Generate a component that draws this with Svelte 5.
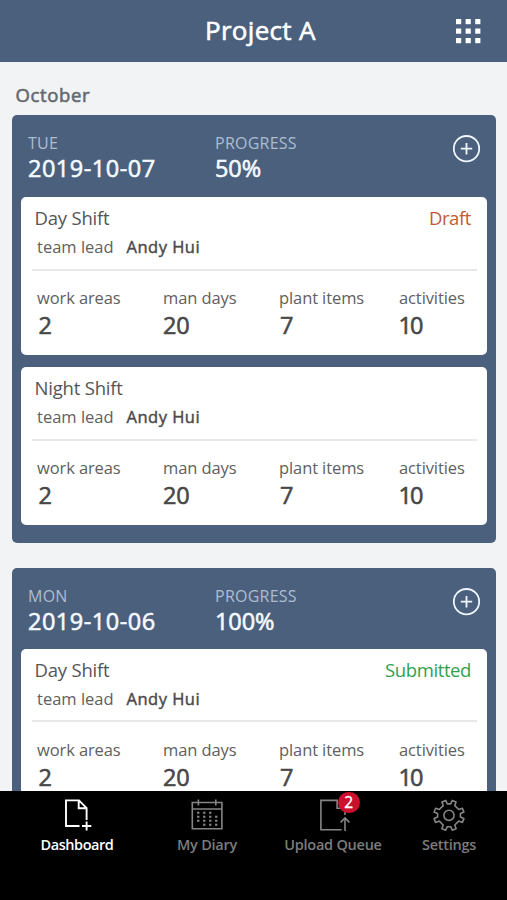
<script>
  const stats = [
    { label: 'work areas', value: '2', x: 'c1' },
    { label: 'man days', value: '20', x: 'c2' },
    { label: 'plant items', value: '7', x: 'c3' },
    { label: 'activities', value: '10', x: 'c4' }
  ];
  const days = [
    {
      day: 'TUE', date: '2019-10-07', progress: '50%',
      shifts: [
        { name: 'Day Shift', status: 'Draft', tone: 'draft' },
        { name: 'Night Shift', status: '', tone: '' }
      ]
    },
    {
      day: 'MON', date: '2019-10-06', progress: '100%',
      shifts: [{ name: 'Day Shift', status: 'Submitted', tone: 'submitted' }]
    }
  ];
  const dots = [0, 1, 2].flatMap((r) => [0, 1, 2].map((c) => [c * 9.6, r * 9.5]));
  const dates = [
    [6, 12.5], [12, 12.5], [18, 12.5],
    [6, 16.5], [12, 16.5], [18, 16.5], [24, 16.5],
    [6, 20.5], [12, 20.5], [18, 20.5], [24, 20.5],
    [12, 24.5], [18, 24.5], [24, 24.5]
  ];
</script>

<div class="screen">
  <header>
    <h1>Project A</h1>
    <svg class="apps" width="25" height="25" viewBox="0 0 25 25" fill="#fff">
      {#each dots as [x, y]}<rect {x} {y} width="5.2" height="5.2" />{/each}
    </svg>
  </header>

  <main>
    <h2>October</h2>
    {#each days as d}
      <section class="day">
        <div class="top">
          <div class="when"><div class="cap">{d.day}</div><div class="big">{d.date}</div></div>
          <div class="prog"><div class="cap">PROGRESS</div><div class="big pct">{d.progress}</div></div>
          <svg class="add" width="28" height="28" viewBox="0 0 28 28" fill="none" stroke="#f0f8ff" stroke-width="1.8">
            <circle cx="13.5" cy="13.7" r="12.7" />
            <path d="M13.5 8v11.4M7.8 13.7h11.4" />
          </svg>
        </div>
        {#each d.shifts as s}
          <article>
            <div class="row"><span class="name">{s.name}</span><span class="status {s.tone}">{s.status}</span></div>
            <div class="lead"><span class="label">team lead</span><b>Andy Hui</b></div>
            <div class="stats">
              {#each stats as st}
                <div class="stat {st.x}"><div class="label">{st.label}</div><div class="num">{st.value}</div></div>
              {/each}
            </div>
          </article>
        {/each}
      </section>
    {/each}
  </main>

  <nav>
    <div class="tab active t1">
      <svg width="32" height="34" viewBox="0 0 32 34" fill="none" stroke="currentColor" stroke-width="1.9">
        <path d="M18.5 28H5V2.4h13l7.6 7.7V22M17.7 2.6v7.6h7.6M25.6 23.4v9M21 28h9.3" />
      </svg>
      <span>Dashboard</span>
    </div>
    <div class="tab t2">
      <svg width="32" height="34" viewBox="0 0 32 34" fill="none" stroke="currentColor" stroke-width="1.6">
        <path d="M1.3 4.5h29.6v26.2H1.3zM1.3 11h29.6M7.4 1.5v6M24.8 1.5v6" />
        <g fill="currentColor" stroke="none">
          {#each dates as [x, y]}<rect x={x + 0.1} y={y + 1.2} width="2.3" height="2.1" />{/each}
        </g>
      </svg>
      <span>My Diary</span>
    </div>
    <div class="tab t3">
      <svg width="32" height="34" viewBox="0 0 32 34" fill="none" stroke="currentColor" stroke-width="1.6">
        <path d="M24.7 31.7H3.9V2.4h16.2v7.9h8M28 13v4M28 33V20.2M23.6 24.4l4.4-4.5 4.4 4.5" />
      </svg>
      <span>Upload Queue</span>
      <i class="badge">2</i>
    </div>
    <div class="tab t4">
      <svg width="32" height="34" viewBox="-16 -17.3 32 34" fill="none" stroke="currentColor" stroke-width="1.6" stroke-linejoin="round">
        <path d="M7.1-13.4L3.3-14.9L1.7-11.4L-1.7-11.4L-3.3-14.9L-7.1-13.4L-5.8-9.7L-9.7-5.8L-13.4-7.1L-14.9-3.3L-11.4-1.7L-11.4 1.7L-14.9 3.3L-13.4 7.1L-9.7 5.8L-5.8 9.7L-7.1 13.4L-3.3 14.9L-1.7 11.4L1.7 11.4L3.3 14.9L7.1 13.4L5.8 9.7L9.7 5.8L13.4 7.1L14.9 3.3L11.4 1.7L11.4-1.7L14.9-3.3L13.4-7.1L9.7-5.8L5.8-9.7Z" />
        <circle r="5.1" />
      </svg>
      <span>Settings</span>
    </div>
  </nav>
</div>

<style>
  :global(body) { margin: 0; }
  .screen {
    width: 507px; height: 900px; overflow: hidden; display: flex; flex-direction: column;
    background: #f2f3f5; font-family: 'Open Sans', 'Noto Sans', sans-serif; white-space: nowrap;
  }
  /* medium weight: regular glyphs with a thin outline */
  h1, h2, .big, .num, .lead b { font-weight: 400; -webkit-text-stroke: 0.6px currentColor; }
  header {
    flex: none; height: 62px; background: #4b607c; display: flex; align-items: center;
    box-sizing: border-box; padding: 0 26px 0 205px; justify-content: space-between;
  }
  h1 { margin: 0 0 2px; font-size: 26px; line-height: 60px; color: #fff; letter-spacing: 0.3px; }
  main { flex: 1; min-height: 0; overflow: hidden; padding: 0 11px 0 12px; }
  h2 { margin: 0; height: 53px; line-height: 65px; padding-left: 3.5px; font-size: 18.5px; color: #666a6e; letter-spacing: 0.65px; }
  .day { background: #4b607c; border-radius: 5px; padding: 0 9px 17.5px; margin-bottom: 26px; }
  .day + .day { margin-top: -0.5px; }
  .top { height: 82px; display: flex; align-items: flex-start; padding: 0 6px 0 7px; }
  .day + .day .top { height: 80.5px; }
  .day + .day .cap { margin-top: 16.5px; }
  .when { width: 187px; }
  .prog { flex: 1; }
  .cap { margin-top: 17px; line-height: 22px; font-size: 16px; color: #adbdd1; letter-spacing: 0.25px; }
  .big { line-height: 29px; font-size: 23.5px; color: #f4faff; letter-spacing: 0.5px; }
  .pct { letter-spacing: -0.1px; }
  .add { margin-top: 20px; }
  article { height: 158px; background: #fff; border-radius: 5px; color: #555; }
  article + article { margin-top: 12px; }
  .row { display: flex; justify-content: space-between; padding: 0 16px 0 13.5px; height: 41px; line-height: 41px; font-size: 18.5px; }
  .name { letter-spacing: -0.2px; }
  .status { letter-spacing: -0.4px; }
  .draft { color: #c25a32; }
  .submitted { color: #30a150; }
  .lead { display: flex; margin: 0 10px 0 11px; height: 30.5px; line-height: 18px; padding-left: 5px; border-bottom: 2px solid #e8e8ea; font-size: 16.5px; }
  .lead .label { width: 89.5px; }
  .lead b { color: #4a4a4a; letter-spacing: 0.5px; -webkit-text-stroke-width: 0.45px; }
  .label { color: #606060; }
  .stats { display: flex; padding: 15.5px 0 0 16px; }
  .stat .label { line-height: 24px; font-size: 16.5px; letter-spacing: -0.1px; }
  .num { line-height: 30px; font-size: 23.5px; color: #484848; padding-left: 1.5px; letter-spacing: -0.2px; }
  .c1 { width: 126px; }
  .c2 { width: 116px; }
  .c3 { width: 120px; }
  .c2 .num { padding-left: 0; }
  .c3 .num { padding-left: 1px; }
  .c4 .num { padding-left: 0; letter-spacing: -2px; margin-left: -0.5px; }
  nav { flex: none; height: 109.5px; background: #000; display: flex; color: #858585; }
  .tab { position: relative; flex: none; display: flex; flex-direction: column; align-items: center; padding-top: 7px; box-sizing: border-box; }
  .tab span { font-size: 14.5px; line-height: 26px; font-weight: 600; letter-spacing: -0.25px; color: #7c7c7c; }
  .tab svg { overflow: visible; display: block; }
  .tab.active span { letter-spacing: -0.45px; color: #fff; }
  .active { color: #fff; }
  .t1 { width: 154px; }
  .t2 { width: 106px; }
  .t3 { width: 146px; }
  .t4 { width: 86px; }
  .badge {
    position: absolute; left: 78px; top: 1px; width: 21.5px; height: 21.5px; border-radius: 50%;
    background: #cb0f2d; color: #fff; font-style: normal; font-size: 15.5px; line-height: 21px; text-align: center;
    -webkit-text-stroke: 0.4px currentColor;
  }
</style>
